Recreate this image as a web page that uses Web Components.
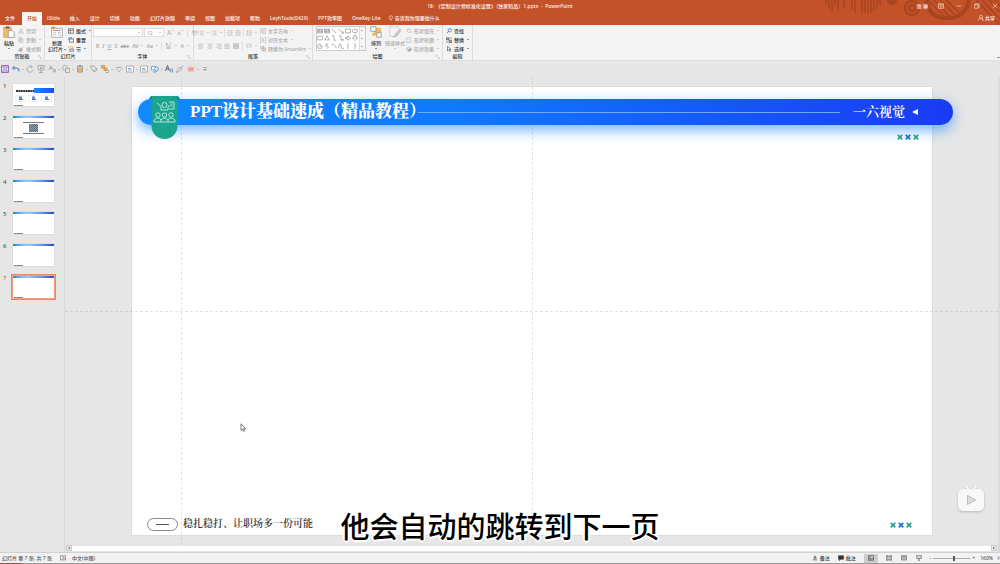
<!DOCTYPE html>
<html lang="zh-CN">
<head>
<meta charset="utf-8">
<title>1.pptx - PowerPoint</title>
<style>
html,body{margin:0;padding:0}
body{font:500 5px/6px "Noto Sans","Noto Sans CJK SC",sans-serif;color:#333;background:#e6e6e6}
</style>
</head>
<body>
<pp-app></pp-app>
<script>
const RESET = `*{box-sizing:border-box}button,select,input{font:inherit;color:inherit;background:none;border:0;margin:0;padding:0;border-radius:0;appearance:none}a{color:inherit;text-decoration:none}svg{display:block}`;

function define(name, css, html) {
  const t = document.createElement('template');
  customElements.define(name, class extends HTMLElement {
    connectedCallback() {
      if (this.shadowRoot) return;
      t.innerHTML = `<style>${RESET}${css}</style>` + (typeof html === 'function' ? html(this) : html);
      this.attachShadow({mode: 'open'}).append(t.content.cloneNode(true));
    }
  });
}

/* Icons, drawn on a 16 x 16 grid with the current colour as stroke. */
const ICONS = {
  paste: '<rect x="1" y="2" width="10" height="13" fill="#efbd67" stroke="#e3b05a"/><rect x="3.500" y=".5" width="5" height="3" fill="#666" stroke="none"/><path d="M7 6h5l3 3v6.500H7z" fill="#fff" stroke="#888" stroke-width="1"/>',
  newslide: '<rect x="1" y="3" width="14" height="12" fill="#fff" stroke="#999" stroke-width="1"/><path d="M3 6h10" stroke="#999"/><path d="M3 9h4M9 9h4M3 12h4M9 12h4" stroke="#bbb"/><path d="M0 2h6M3 0v5" stroke="#e59b35"/>',
  cut: '<path d="M4 1l7 10M12 1L5 11"/><circle cx="4" cy="13" r="2"/><circle cx="12" cy="13" r="2"/>',
  copy: '<path d="M2 1h6v10H2zM6 5h7v10H6z" fill="#f3f3f3"/>',
  brush: '<path d="M15 2l-5 5M7 5l5 5-4 5-7-3z" fill="currentColor"/>',
  layout: '<path d="M1 2h14v12H1zM1 6h14M6 6v8"/>',
  reset: '<path d="M4 5h11v9H4z"/><path d="M2 8V2h7M6 0l4 2-4 3" stroke="#2f72b8"/>',
  section: '<path d="M5 8h9v6H5z"/><path d="M1 2h12M1 2v4M13 2v4" stroke="#e59b35"/>',
  bullets: '<path d="M6 3h9M6 8h9M6 13h9"/><path d="M1 3h2M1 8h2M1 13h2" stroke-width="2"/>',
  indent: '<path d="M1 2h14M7 6h8M7 10h8M1 14h14M1 8h4M3 6l2 2-2 2"/>',
  outdent: '<path d="M1 2h14M7 6h8M7 10h8M1 14h14M1 8h4M3 6L1 8l2 2"/>',
  spacing: '<path d="M7 2h8M7 6h8M7 10h8M7 14h8M3 2v12M1 4l2-2 2 2M1 12l2 2 2-2"/>',
  left: '<path d="M1 3h14M1 7h9M1 11h14M1 15h9"/>',
  center: '<path d="M1 3h14M4 7h8M1 11h14M4 15h8"/>',
  right: '<path d="M1 3h14M6 7h9M1 11h14M6 15h9"/>',
  justify: '<path d="M1 3h14M1 7h14M1 11h14M1 15h14"/>',
  dist: '<rect x="1" y="2" width="14" height="12" fill="#ddd"/><path d="M4 5v6M12 5v6M4 6h8M4 10h8"/>',
  columns: '<path d="M1 3h6M1 7h6M1 11h6M9 3h6M9 7h6M9 11h6"/>',
  textdir: '<path d="M2 1v14M6 1v14M10 1v14M10 2h5v12h-5"/>',
  aligntext: '<path d="M4 1H1v14h3M12 1h3v14h-3M8 2v12M5 8h6"/>',
  smartart: '<path d="M1 1h9v6H1zM6 5h9v9H6z" fill="#e4e4e4"/><path d="M8 8h5M8 11h5"/>',
  arrange: '<path d="M6 3h8v9H6z" fill="#efbd67" stroke="#efbd67"/><path d="M1 1h7v6H1zM9 9h6v6H9z" fill="#fff" stroke="#888" stroke-width="1"/><path d="M3 9h4v4H3z" fill="#efbd67" stroke="none"/>',
  styles: '<path d="M1 1h12v9l-4 4H1z" fill="#f5f1f7" stroke="#ccc" stroke-width="1"/><path d="M15 4l-6 6-3 5 5-2 5-7z" fill="#c9c9c9" stroke="#bbb" stroke-width="1"/>',
  fill: '<path d="M7 2l6 6-5 5-6-6zM5 1v5M14 10v4"/>',
  outline: '<path d="M10 2H2v12h11V9M14 2L7 9"/>',
  effects: '<path d="M2 6l6-4 6 4v5l-6 4-6-4z"/><path d="M5 10l6-4 3 2v3l-6 4z" fill="currentColor"/>',
  find: '<circle cx="10" cy="6" r="4.500" stroke="#2f72b8" stroke-width="2"/><path d="M7 9l-5 5" stroke="#2f72b8" stroke-width="2"/>',
  replace: '<path d="M1 2h7v5H1zM8 9h7v6H8z" fill="#bbb"/><path d="M11 2h3v4M2 10v4h4" stroke="#2f72b8"/>',
  pick: '<path d="M4 1v12l3-3 3 5 2-1-3-5h4z" fill="#fff"/>',
  growA: '<path d="M1 14L5 3l4 11M3 10h5M11 4l2-2 2 2"/>',
  shrinkA: '<path d="M2 14l3-8 3 8M3 11h4M11 2l2 2 2-2"/>',
  clear: '<path d="M2 9L6 2l3 7M3 7h5M13 4l2 3-6 7H6l-2-2z"/>',
  spell: '<path d="M1 8l3-6 3 6M2 6h4M9 9l5-7M3 11h10" /><path d="M3 14h11" stroke-width="2"/>',
  save: '<path d="M1 1h14v14H1z" stroke="#9a6cbd" stroke-width="2"/><path d="M4 2h8v4H4zM4 10h8v4H4z" stroke="#9a6cbd" fill="#eee"/>',
  undo: '<path d="M5 2L1 6l4 4M2 6h7q6 0 5 7" stroke="#2f72b8" stroke-width="2"/>',
  redo: '<path d="M12 4a6 6 0 1 0 2 5M9 1l4 3-4 3"/>',
  show: '<path d="M1 1h14M2 2v8h12V2M8 10v5M4 15h8M7 4v4l4-2z"/>',
  merge: '<path d="M2 9l4-7 3 7M3 7h5M11 9h4v5h-4z"/>',
  shapes2: '<circle cx="6" cy="6" r="5"/><path d="M7 7h8v8H7z" fill="#e6e6e6"/>',
  clip: '<path d="M3 2h10v12H3z" stroke="#888"/><path d="M5 6h6v8H5z" fill="#f2b55f" stroke="#e5a04c"/><path d="M6 1h4v3H6z" fill="#5382b5" stroke="none"/>',
  eyed: '<path d="M1 2h7l4 5-4 4H5zM12 7l3 1-5 6-4-2"/>',
  align: '<path d="M1 1h6v5H1zM6 6h6v5H6z" fill="#e9b566" stroke="#c78a35"/><path d="M10 11h5v4h-5z" fill="#fff"/>',
  heart: '<path d="M8 14L2 7q0-5 6-2 6-3 6 2zM5 5h6" stroke="#aaa"/>',
  picture: '<path d="M1 2h14v12H1z" fill="#fff"/><path d="M4 7h6M4 10h8" stroke="#5b8fc6"/>',
  shape3: '<path d="M1 3h8v7H1z" fill="#fff" stroke="#5b8fc6"/><circle cx="11" cy="8" r="4" fill="#dbe7f3" stroke="#5b8fc6"/><path d="M4 14h6l2-2" stroke="#5b8fc6"/>',
  fonts: '<path d="M1 12L5 1l4 11M3 8h5" stroke="#666" stroke-width="2"/><path d="M11 8h4v6h-4z" stroke="#5b8fc6"/>',
  dropper: '<path d="M15 1l-5 5M8 4l4 4-8 6-3 1 1-3z" stroke="#999"/>',
  red: '<path d="M2 4h12v9H2z" fill="#f2b1ac" stroke="#efc4c0"/><path d="M5 6v5M10 6v5M4 8h8" stroke="#e98f88"/>',
  more: '<path d="M4 5h8"/><path d="M4 8h8l-4 4z" fill="currentColor" stroke="none"/>',
  bulb: '<path d="M5.500 11Q1 6 5 3q6-3 7 2 0 3-2.500 6zM6 13h4M7 15h2"/>',
  user: '<circle cx="8" cy="5" r="4"/><path d="M1 15q0-6 5-6h4l4 3M11 13h4M13 11v4"/>',
  ribbonopt: '<path d="M1 2h14v12H1zM1 5h14M8 13V8M5 10l3-3 3 3"/>',
  min: '<path d="M2 8h12"/>', max: '<path d="M1 5h10v9H1zM4 5V2h10v9h-3"/>', close: '<path d="M2 2l12 12M14 2L2 14"/>',
  book: '<path d="M1 2h6l1 1 1-1h6v11H9l-1 1-1-1H1zM8 3v10M10 6l3 4"/>',
  note: '<path d="M2 13h12M4 10h8M5 7l3-5 3 5z"/>',
  comment: '<path d="M1 2h14v9H7l-3 4v-4H1z" fill="currentColor"/>',
  normal: '<path d="M1 2h14v12H1zM5 2v12M5 10h10"/>',
  sorter: '<path d="M1 2h5v4H1zM10 2h5v4h-5zM1 10h5v4H1zM10 10h5v4h-5z"/>',
  reading: '<path d="M1 2h6l1 1 1-1h6v11H9l-1 1-1-1H1zM8 3v10M3 5h3M3 8h3M10 5h3M10 8h3"/>',
  present: '<path d="M1 2h14M2 2v7h12V2M8 9v5M5 14h6"/>',
  fit: '<path d="M1 2h14v12H1zM8 4v8M4 8h8"/>',
  launch: '<path d="M2 8V2h6M6 6l7 7M13 8v5H8"/>',
  s0: '<path d="M1 3h14v10H1z" fill="#dbe6f2"/><path d="M4 10l2-5 2 5M10 6h4M10 9h4"/>',
  s1: '<path d="M1 3h14v10H1z" fill="#dbe6f2"/><path d="M3 6h5M3 9h5M10 10l2-5 2 5"/>',
  s2: '<path d="M2 2l12 12"/>', s3: '<path d="M2 2l12 12M14 9v5H9"/>', s4: '<path d="M1 3h14v10H1z"/>',
  s5: '<ellipse cx="8" cy="8" rx="7" ry="5"/>', s6: '<rect x="1" y="3" width="14" height="10" rx="3"/>', s7: '<path d="M8 2l6 11H2z"/>',
  s8: '<path d="M2 2h6v12h6"/>', s9: '<path d="M2 2h6v11h6M12 10l3 3-3 3"/>', s10: '<path d="M1 6h7V2l7 6-7 6v-4H1z"/>',
  s11: '<path d="M5 1v7H1l7 7 7-7h-4V1z"/>', s12: '<path d="M3 14L1 7l6-5 3 2-3 4h7l-2 6z"/>', s13: '<path d="M4 2l6 2-6 4 8 3-4 4"/>',
  s14: '<path d="M1 3q11 0 13 11"/>', s15: '<path d="M1 13Q5-6 8 8t7 5"/>', s16: '<path d="M10 1q-3 0-2 4 0 3-2 3 2 0 2 3-1 4 2 4"/>', s17: '<path d="M6 1q3 0 2 4 0 3 2 3-2 0-2 3 1 4-2 4"/>'
};

define('pp-icon',
  `:host{display:inline-block;width:6px;height:6px;flex:none}svg{width:100%;height:100%}`,
  e => `<svg viewBox="0 0 16 16" fill="none" stroke="currentColor" stroke-width="1.500" aria-hidden="true">${ICONS[e.getAttribute('name')] || ''}</svg>`);

/* Command button: icon, text label and optional drop-down caret. */
define('pp-cmd',
  `:host{display:block;color:#333;flex:none}:host([dim]){color:#aaa}
   button{display:flex;align-items:center;gap:2px;height:9px;white-space:nowrap}
   i{width:0;height:0;border:1px solid transparent;border-top-color:currentColor;border-bottom:0;margin-left:1px}
   span i{display:inline-block;vertical-align:middle}
   :host([big]) button{flex-direction:column;height:auto;gap:1px}
   :host([big]) pp-icon{width:12px;height:12px;margin-bottom:1px}
   :host([big]) span{text-align:center;white-space:pre-line;line-height:6px}
   :host([big]) button>i{margin:1px 0 0}
   :host([tool]) pp-icon{width:7px;height:7px}
   :host([qat]) pp-icon{width:8px;height:8px}
   :host([qat]) button{gap:1px}
   b{font-weight:600}`,
  e => {
    const icon = e.getAttribute('icon'), label = e.getAttribute('label'), text = e.getAttribute('text');
    const inline = e.hasAttribute('inline') ? '<i></i>' : '';
    return `<button type="button" aria-label="${label || icon}">${icon ? `<pp-icon name="${icon}"></pp-icon>` : ''}${text ? `<b>${text}</b>` : ''}${label ? `<span>${label}${inline}</span>` : ''}${e.hasAttribute('caret') ? '<i></i>' : ''}</button>`;
  });

define('pp-titlebar',
  `:host{display:block;position:relative;background:#c35229;color:#fff0ea;overflow:hidden}
   .art{position:absolute;right:0;top:0;width:180px;height:25px}
   .top{position:relative;display:grid;grid-template-columns:1fr auto 1fr;align-items:center;height:11px;padding:0 2px}
   .title{white-space:pre}
   .win{display:flex;justify-content:flex-end;align-items:center;gap:12px}
   .win span{margin-right:-2px}
   .win button{display:flex}
   nav{position:relative;display:flex;align-items:stretch;height:14px}
   nav a{padding:4px 5px;white-space:nowrap}
   nav a.file{margin-right:2px}
   nav a.on{background:#f5f5f5;color:#c35229;margin-top:1px;padding-top:3px}
   .tell{display:flex;align-items:center;gap:1px;margin-left:2px;white-space:nowrap}
   .share{display:flex;align-items:center;gap:1px;margin:0 5px 0 auto}`,
  `<svg class="art" viewBox="0 0 180 25" fill="none" stroke="#a94421" aria-hidden="true">
    <path d="M6 0v5M9 0v9M12 0v12M15 0v6M18 0v10M24 0v8M32 0v10M35 0v13M42 0v14M45 0v13M48 0v14M51 0v13M54 0v11M57 0v9M60 0v5" stroke-width="1.500"/>
    <circle cx="72" cy="0" r="5" fill="#a94421" stroke="none"/>
    <circle cx="92" cy="8" r="7" stroke-width="2"/><circle cx="92" cy="8" r="3" stroke-width="2"/>
    <path d="M106 0q3 19 22 18 18 0 21-18" stroke-width="4"/><path d="M108 0l17 17M114 0l16 17M120 0l16 16M126 0l14 13M169 0l11 12M175 0l5 6M156 0l24 25M162 0l18 19" stroke-width="1.500"/></svg>
   <div class="top"><span></span><span class="title">18- 《定制设计师标准化设置》（独家精品）1.pptx  -  PowerPoint</span>
    <div class="win"><span>张 琳</span><button aria-label="功能区选项"><pp-icon name="ribbonopt"></pp-icon></button><button aria-label="最小化"><pp-icon name="min"></pp-icon></button><button aria-label="还原"><pp-icon name="max"></pp-icon></button><button aria-label="关闭"><pp-icon name="close"></pp-icon></button></div></div>
   <nav><a class="file" href="#">文件</a><a class="on" href="#">开始</a><a href="#">iSlide</a><a href="#">插入</a><a href="#">设计</a><a href="#">切换</a><a href="#">动画</a><a href="#">幻灯片放映</a><a href="#">审阅</a><a href="#">视图</a><a href="#">加载项</a><a href="#">帮助</a><a href="#">LeyhTools(0429)</a><a href="#">PPT效率图</a><a href="#">OneKey Lite</a>
    <button class="tell"><pp-icon name="bulb"></pp-icon>告诉我你想要做什么</button><button class="share"><pp-icon name="user"></pp-icon>共享</button></nav>`);

define('pp-group',
  `:host{display:flex;flex-direction:column;position:relative;flex:none;border-right:1px solid #dcdcdc;padding:1px 3px 0}
   .body{display:flex;align-items:flex-start;height:28px}
   footer{text-align:center;height:7px;line-height:7px}
   pp-icon{position:absolute;right:2px;bottom:1px;width:4px;height:4px;color:#999}`,
  e => `<div class="body"><slot></slot></div><footer>${e.getAttribute('name')}</footer>${e.hasAttribute('dialog') ? '<pp-icon name="launch"></pp-icon>' : ''}`);

define('pp-ribbon',
  `:host{display:flex;background:#f3f3f3;height:36px;border-bottom:1px solid #dedede}
   .col{display:flex;flex-direction:column}
   .row{display:flex;align-items:center;gap:2px;height:13px}
   .g1{width:45px}.g2{width:47px}.g3{width:102px}.g4{width:119px}.g5{width:130px}.g6{width:30px}
   .g1 .col{margin-left:3px}.g2 .col{margin-left:2px}
   .combo{display:flex;align-items:center;height:9px;background:#fff;border:1px solid #ddd;color:#aaa}
   .combo select{width:100%;height:7px;padding:0 2px;line-height:6px}
   .combo i{flex:none;border:1px solid transparent;border-top-color:#999;border-bottom:0;margin-right:2px}
   .ff{width:50px}.fs{width:20px;margin-left:-2px}
   .sp{width:1px;height:8px;background:#ddd}
   .g3{padding:1px 1px 0}
   .f1{gap:3px}
   .f2{justify-content:space-between;gap:0;width:96px;padding-left:3px}
   .p{width:62px;padding-left:1px}.p .row{justify-content:space-between}
   .side{margin-left:3px}
   .gal{display:flex;border:1px solid #ccc;background:#fff;height:25px;width:54px;margin-right:4px}
   .cells{display:grid;grid-template-columns:repeat(6,1fr);place-items:center;flex:1;color:#777}
   .bar{width:6px;border-left:1px solid #ddd;display:grid;grid-template-rows:1fr 1fr 1fr;place-items:center;background:#f5f5f5;color:#777}
   .bar i{border:1px solid transparent;border-top-color:currentColor;border-bottom:0}
   .st{margin-left:3px}.fx{margin-left:1px}
   .end{margin:auto 0 1px auto;width:3px;height:2px;border-top:1px solid #999}`,
  `<pp-group class="g1" name="剪贴板" dialog><pp-cmd big icon="paste" label="粘贴" caret></pp-cmd><div class="col"><pp-cmd dim icon="cut" label="剪切"></pp-cmd><pp-cmd dim icon="copy" label="复制" caret></pp-cmd><pp-cmd dim icon="brush" label="格式刷"></pp-cmd></div></pp-group>
   <pp-group class="g2" name="幻灯片"><pp-cmd big inline icon="newslide" label="新建&#10;幻灯片"></pp-cmd><div class="col"><pp-cmd icon="layout" label="版式" caret></pp-cmd><pp-cmd icon="reset" label="重置"></pp-cmd><pp-cmd icon="section" label="节" caret></pp-cmd></div></pp-group>
   <pp-group class="g3" name="字体" dialog><div class="col">
     <div class="row f1"><span class="combo ff"><select aria-label="字体"><option></option></select><i></i></span><span class="combo fs"><select aria-label="字号"><option>12</option></select><i></i></span><pp-cmd dim tool icon="growA"></pp-cmd><pp-cmd dim tool icon="shrinkA"></pp-cmd><span class="sp"></span><pp-cmd dim tool icon="clear"></pp-cmd></div>
     <div class="row f2"><pp-cmd dim text="B"></pp-cmd><pp-cmd dim text="<em>I</em>"></pp-cmd><pp-cmd dim text="<u>U</u>"></pp-cmd><pp-cmd dim text="S"></pp-cmd><pp-cmd dim text="<s>abc</s>"></pp-cmd><pp-cmd dim text="AV" caret></pp-cmd><pp-cmd dim text="Aa" caret></pp-cmd><span class="sp"></span><pp-cmd dim tool icon="spell" caret></pp-cmd><pp-cmd dim text="A" caret></pp-cmd></div></div></pp-group>
   <pp-group class="g4" name="段落" dialog><div class="col p">
     <div class="row"><pp-cmd dim icon="bullets" caret></pp-cmd><pp-cmd dim icon="bullets" caret></pp-cmd><span class="sp"></span><pp-cmd dim icon="outdent"></pp-cmd><pp-cmd dim icon="indent"></pp-cmd><span class="sp"></span><pp-cmd dim icon="spacing" caret></pp-cmd></div>
     <div class="row"><pp-cmd dim icon="left"></pp-cmd><pp-cmd dim icon="center"></pp-cmd><pp-cmd dim icon="right"></pp-cmd><pp-cmd dim icon="justify"></pp-cmd><pp-cmd dim icon="dist"></pp-cmd><span class="sp"></span><pp-cmd dim icon="columns" caret></pp-cmd></div></div>
     <div class="col side"><pp-cmd dim icon="textdir" label="文字方向" caret></pp-cmd><pp-cmd dim icon="aligntext" label="对齐文本" caret></pp-cmd><pp-cmd dim icon="smartart" label="转换为 SmartArt" caret></pp-cmd></div></pp-group>
   <pp-group class="g5" name="绘图" dialog><div class="gal"><div class="cells">${Array.from({length: 18}, (_, i) => `<pp-icon name="s${i}"></pp-icon>`).join('')}</div><div class="bar"><i></i><i></i><i></i></div></div>
     <pp-cmd big icon="arrange" label="排列" caret></pp-cmd><pp-cmd class="st" big dim icon="styles" label="快速样式" caret></pp-cmd><div class="col fx"><pp-cmd dim icon="fill" label="形状填充" caret></pp-cmd><pp-cmd dim icon="outline" label="形状轮廓" caret></pp-cmd><pp-cmd dim icon="effects" label="形状效果" caret></pp-cmd></div></pp-group>
   <pp-group class="g6" name="编辑"><div class="col"><pp-cmd icon="find" label="查找"></pp-cmd><pp-cmd icon="replace" label="替换" caret></pp-cmd><pp-cmd icon="pick" label="选择" caret></pp-cmd></div></pp-group><span class="end"></span>`);

const QAT = ['save', 'undo*', 'redo', 'show', 'merge*', 'shapes2*', 'clip*', 'eyed', 'align*', 'heart', 'picture*', 'picture', 'shape3*', 'fonts', 'dropper', 'red*', 'more'];
define('pp-quickbar',
  `:host{display:flex;align-items:center;height:16px;padding-left:1px;background:#e6e6e6}
   pp-cmd{width:11px;color:#999}pp-cmd[caret]{width:14px}`,
  QAT.map(n => `<pp-cmd qat icon="${n.replace('*', '')}"${n.endsWith('*') ? ' caret' : ''}></pp-cmd>`).join(''));

define('pp-thumb',
  `:host{display:grid;grid-template-columns:9px 43px;gap:1px;font-size:6px;line-height:6px;color:#555}
   :host([on]){color:#e0663c}
   .n{padding-left:1px}
   .page{position:relative;height:24px;background:#fff;border:1px solid #ddd;display:flex;flex-direction:column;justify-content:space-between}
   :host([on]) .page{outline:1px solid #f0845e;border-color:#f3a184}
   .bar{height:2px;background:linear-gradient(90deg,#20a495 3px,#4ba9f5 4px,#9cc8f5 14px,#5a97ee 70%,#2f45d8)}
   .foot{width:9px;height:1px;margin-left:1px;background:#888}
   .mid{display:flex;flex-direction:column;align-items:center}
   .hero{display:flex;align-items:center;width:100%;height:6px;padding-left:3px}
   .hero b{flex:1}
   .hero span{width:20px;height:5px;background:linear-gradient(90deg,#168cff,#1750e8)}
   .cards{display:flex;gap:2px;margin-top:1px}.cards i{width:11px;height:7px;border:1px solid #edf1f6;background:radial-gradient(circle at 50% 35%,#4f86cf 1px,transparent 2px),linear-gradient(#666,#666) 50% 90%/4px 1px no-repeat}
   .ln{width:21px;height:1px;background:#777}.qr{width:9px;height:8px;margin:1px 0;background:repeating-conic-gradient(#567 0 25%,#8ab 0 50%) 0 0/2px 2px}`,
  e => {
    const k = e.getAttribute('kind');
    const mid = k === 'cover' ? '<div class="mid"><div class="hero"><b><svg viewBox="0 0 18 4" width="18" height="4" aria-hidden="true"><path d="M0 2h18" stroke="#333" stroke-width="2" stroke-dasharray="2 .4"/></svg></b><span></span></div><div class="cards"><i></i><i></i><i></i></div></div>'
      : k === 'qr' ? '<div class="mid"><i class="ln"></i><i class="qr"></i><i class="ln"></i></div>' : '';
    return `<span class="n">${e.getAttribute('n')}</span><div class="page">${k === 'cover' ? '<i></i>' : '<i class="bar"></i>'}${mid}<i class="foot"></i></div>`;
  });

define('pp-crosses',
  `:host{display:block;width:22px;height:6px}svg{width:22px;height:6px}`,
  `<svg viewBox="0 0 22 6" fill="none" stroke-width="1.800" aria-hidden="true"><path d="M.8.8l4.500 4.500M5.300.8L.8 5.300" stroke="#25a391"/><path d="M8.800.8l4.500 4.500M13.300.8L8.800 5.300" stroke="#1b71dc"/><path d="M16.700.8l4.500 4.500M21.200.8l-4.500 4.500" stroke="#25a391"/></svg>`);

define('pp-slide',
  `:host{display:block;position:relative;aspect-ratio:802/450;background:#fff;border:1px solid #dcdcdc;font-family:"Liberation Serif","Noto Serif CJK SC","Noto Sans CJK SC",serif}
   .banner{position:absolute;left:6px;right:-21px;top:12px;height:26px;border-radius:13px;background:linear-gradient(90deg,#118aff,#0f78ff 40%,#1a3bf3);box-shadow:0 5px 14px rgba(20,130,255,.6);display:flex;align-items:center;padding:0 34px 0 52px;color:#fff}
   h1{margin:0;font-size:17px;line-height:28px;font-weight:900;white-space:nowrap}
   .rule{flex:1;height:1px;background:#6faaff;margin:0 13px 0 -8px}
   .brand{font-size:13px;line-height:26px;font-weight:600;margin-right:7px}
   .tri{width:0;height:0;border:3px solid transparent;border-right:6px solid #fff;border-left:0;margin-right:1px}
   .badge{position:absolute;left:17px;top:9px;width:31px;height:43px}
   .x1{position:absolute;right:13px;top:47px}.x2{position:absolute;right:20px;bottom:7px}
   .foot{position:absolute;left:15px;bottom:4px;display:flex;align-items:center;gap:5px;font-size:10px;line-height:14px;font-weight:600;color:#333}
   .pill{width:31px;height:13px;border:1px solid #888;border-radius:7px;display:grid;place-items:center}
   .pill i{width:13px;height:1px;background:#555}`,
  `<div class="banner"><h1>PPT设计基础速成（精品教程）</h1><i class="rule"></i><span class="brand">一六视觉</span><i class="tri"></i></div>
   <svg class="badge" viewBox="0 0 31 43" aria-hidden="true"><path d="M0 3L2 0h27l2 3z" fill="#087a70"/><path d="M2.500 0h26v30a13 13 0 0 1-26 0z" fill="#1ba58f"/>
    <g fill="none" stroke="#d9f5ee" stroke-width=".8"><circle cx="15.500" cy="9" r="2.500"/><path d="M8 7l4 3.500V14h7v-3l2-2M20 6h5v7h-5M21.500 8h2M21.500 10h2"/><circle cx="9" cy="19" r="2.200"/><circle cx="15.500" cy="19" r="2.200"/><circle cx="22" cy="19" r="2.200"/><path d="M5 26v-2q4-4 7 0 3.500-4 7 0 3-4 7 0v2zM12 24v2M19 24v2"/></g></svg>
   <pp-crosses class="x1"></pp-crosses><pp-crosses class="x2"></pp-crosses>
   <div class="foot"><span class="pill"><i></i></span><span>稳扎稳打、让职场多一份可能</span></div>`);

define('pp-stage',
  `:host{display:flex;flex-direction:column;flex:1;min-width:0;position:relative;border-left:1px solid #d9d9d9;border-right:2px solid #dadada}
   .canvas{position:relative;padding:9px 65px 9px 66px}
   .v,.h{position:absolute;pointer-events:none}
   .v{top:0;bottom:0;border-left:1px dashed rgba(120,120,120,.2)}.v1{left:116px}.v2{left:50%}
   .h{left:0;right:0;top:50%;border-top:1px dashed rgba(120,120,120,.2)}
   .ptr{position:absolute;left:175px;top:346px;width:6px;height:9px}
   .scroll{display:flex;align-items:center;height:6px;margin:0 1px}
   .scroll button{width:6px;height:6px;border:1px solid #ccc;display:grid;place-items:center}
   .scroll i{flex:1;height:5px;background:#fff}
   .tri{width:0;height:0;border:1px solid transparent}
   .l{border-right:2px solid #666;border-left:0}.r{border-left:2px solid #666;border-right:0}
   .tv{position:absolute;right:13px;bottom:39px;width:28px;height:28px;filter:drop-shadow(0 1px 1px rgba(0,0,0,.2))}`,
  `<div class="canvas"><pp-slide></pp-slide><i class="v v1"></i><i class="v v2"></i><i class="h"></i>
    <svg class="ptr" viewBox="0 0 6 9" aria-hidden="true"><path d="M1 .8v6.500l1.500-1.300 1 2.300 1-.5-1-2.200h2z" fill="#fff" stroke="#555" stroke-width=".8"/></svg></div>
   <div class="scroll"><button aria-label="向左"><span class="tri l"></span></button><i></i><button aria-label="向右"><span class="tri r"></span></button></div>
   <svg class="tv" viewBox="0 0 28 28" aria-hidden="true"><path d="M9 1l3 4M19 1l-3 4" stroke="#f8f8f8" stroke-width="2" stroke-linecap="round"/><rect x="1" y="4" width="26" height="22" rx="5" fill="#f8f8f8"/><path d="M10.500 10.500v9l8-4.500z" fill="#ddd" stroke="#bbb" stroke-linejoin="round"/></svg>`);

define('pp-status',
  `:host{display:flex;align-items:center;height:11px;background:#f2f2f2;border-top:1px solid #d0d0d0;padding:0 0 0 2px;white-space:pre;color:#555}
   .lang{margin:0 auto 0 6px}.bk{margin-left:8px}
   .sel{background:#ccc;padding:0 4px}
   .views{display:flex;gap:9px;margin:0 8px}
   .views .sel{margin-right:-1px}
   .notes{display:flex;gap:8px}
   .zoom{display:flex;align-items:center;gap:2px}
   input{width:37px;height:9px;background:linear-gradient(#aaa,#aaa) center/100% 1px no-repeat}
   input::-webkit-slider-thumb{appearance:none;width:2px;height:5px;background:#555}
   .pct{margin:0 4px 0 5px}.fit{width:3px}`,
  `<span>幻灯片 第 7 张, 共 7 张</span><pp-icon class="bk" name="book"></pp-icon><span class="lang">中文(中国)</span>
<div class="notes"><pp-cmd icon="note" label="备注"></pp-cmd><pp-cmd icon="comment" label="批注"></pp-cmd></div><div class="views"><pp-cmd class="sel" icon="normal"></pp-cmd><pp-cmd icon="sorter"></pp-cmd><pp-cmd icon="reading"></pp-cmd><pp-cmd icon="present"></pp-cmd></div><div class="zoom"><button aria-label="缩小">-</button><input type="range" min="0" max="100" value="56" aria-label="缩放"><button aria-label="放大">+</button></div><span class="pct">160%</span><pp-icon class="fit" name="fit"></pp-icon>`);

define('pp-caption',
  `:host{display:block;font:500 29px/40px "Noto Sans CJK SC",sans-serif;color:#000;white-space:nowrap;
   text-shadow:0 0 2px #fff,2px 0 1px #fff,-2px 0 1px #fff,0 2px 1px #fff,0 -2px 1px #fff,1px 1px 1px #fff,-1px -1px 1px #fff,1px -1px 1px #fff,-1px 1px 1px #fff}`,
  `<slot></slot>`);

define('pp-app',
  `:host{display:flex;flex-direction:column;position:relative;min-height:100vh;overflow:hidden}
   main{display:flex;flex:1}
   aside{width:64px;flex:none;display:flex;flex-direction:column;gap:8px;padding:6px 0 0 2px}
   .edge{height:1px;background:linear-gradient(90deg,#8a5a40 22px,#999 23px)}
   pp-caption{position:absolute;left:50%;bottom:19px;transform:translateX(-50%)}`,
  `<pp-titlebar></pp-titlebar><pp-ribbon></pp-ribbon><pp-quickbar></pp-quickbar>
   <main><aside><pp-thumb n="1" kind="cover"></pp-thumb><pp-thumb n="2" kind="qr"></pp-thumb><pp-thumb n="3"></pp-thumb><pp-thumb n="4"></pp-thumb><pp-thumb n="5"></pp-thumb><pp-thumb n="6"></pp-thumb><pp-thumb n="7" on></pp-thumb></aside><pp-stage></pp-stage></main>
   <pp-status></pp-status><div class="edge"></div><pp-caption>他会自动的跳转到下一页</pp-caption>`);
</script>
</body>
</html>
